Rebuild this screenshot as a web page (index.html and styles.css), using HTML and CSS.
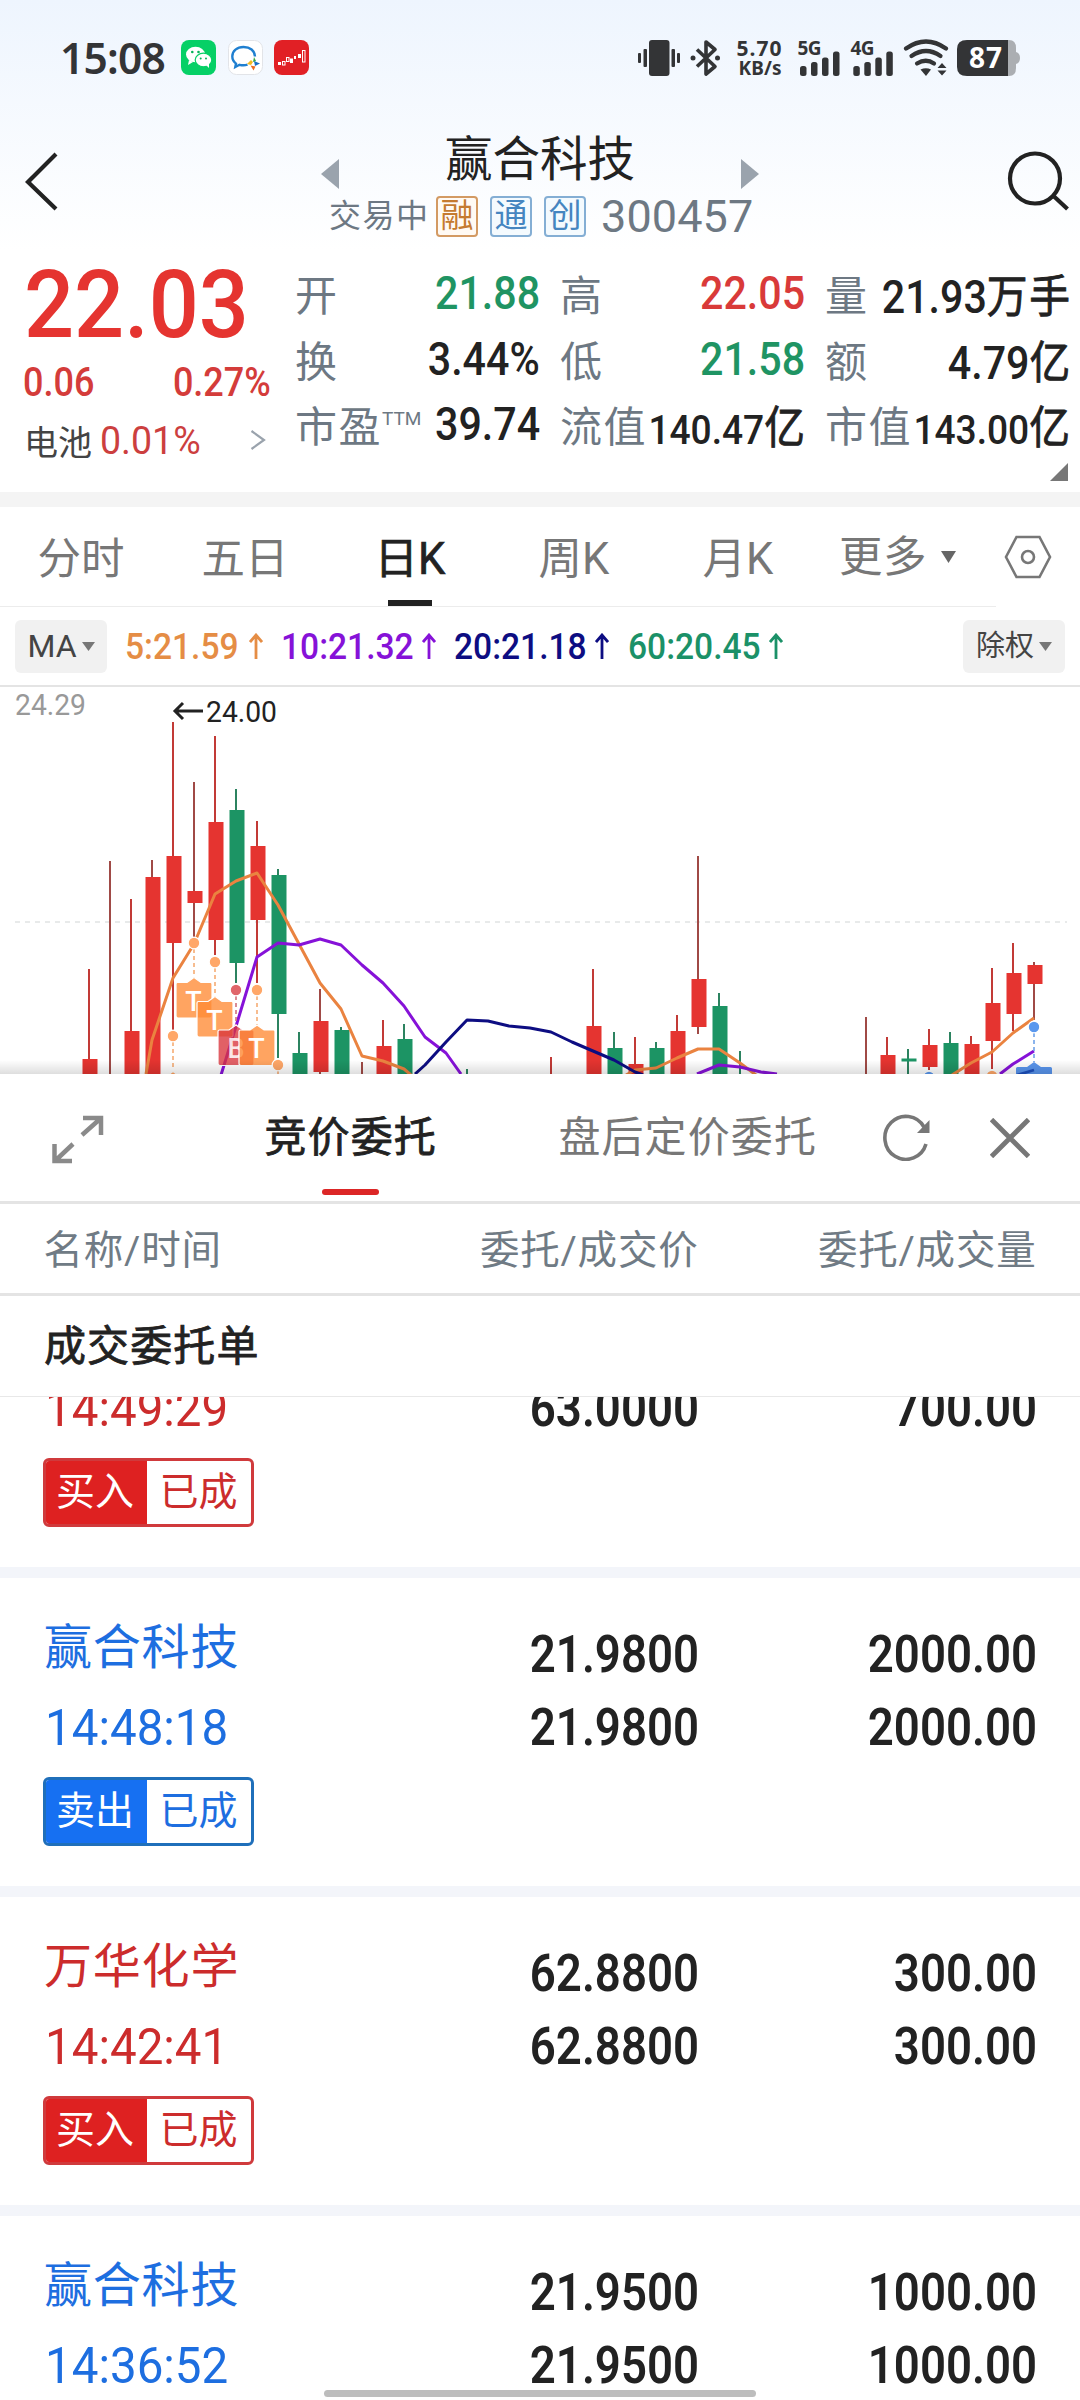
FILE: index.html
```html
<!DOCTYPE html>
<html lang="zh-CN">
<head>
<meta charset="utf-8">
<title>赢合科技 300457</title>
<link rel="stylesheet" href="styles.css">
</head>
<body>
<div class="top">
  <div class="status">
    <span class="clock">15:08</span>
    <div class="apps">
      <svg width="35" height="35" viewBox="0 0 35 35"><rect width="35" height="35" rx="8" fill="#06d066"/><ellipse cx="14.500" cy="14.500" rx="9.500" ry="7.800" fill="#fff"/><path d="M8 20l-1 5 5-3z" fill="#fff"/><ellipse cx="22.500" cy="20" rx="8.300" ry="6.800" fill="#fff" stroke="#06d066" stroke-width="1.200"/><path d="M25 25l3 3 0-5z" fill="#fff"/><g fill="#06b058"><circle cx="11.300" cy="12" r="1.300"/><circle cx="17.500" cy="12" r="1.300"/><circle cx="19.700" cy="18.500" r="1"/><circle cx="25" cy="18.500" r="1"/></g></svg>
      <svg width="35" height="35" viewBox="0 0 35 35"><rect x=".5" y=".5" width="34" height="34" rx="8" fill="#fff" stroke="#e2e4e8"/><path d="M27 16.500C26.800 10.500 22 7 15.500 7 9 7 4.300 11 4.300 16.300c0 3.200 1.500 5.700 3.700 7.300L7.300 27l4.200-2.200c3 .8 5.500.7 8-.2" fill="none" stroke="#1f7fd0" stroke-width="2.400"/><path d="M26 17l2 4-3 1z" fill="#36a93f"/><path d="M19 24l4-4 2 2-2 3z" fill="#f3b91f"/><path d="M26 21l6 2.500-5 2.500z" fill="#1a6fc4"/><path d="M22.500 25.500l5 1-2 4z" fill="#ee6a1d"/></svg>
      <svg width="35" height="35" viewBox="0 0 35 35"><rect width="35" height="35" rx="8" fill="#e12025"/><g fill="#fff"><rect x="4" y="22" width="3" height="3"/><rect x="16" y="18.500" width="3" height="4.500"/><rect x="20" y="16" width="2" height="3"/><rect x="24" y="14" width="3" height="4"/></g><g fill="none" stroke="#fff"><rect x="8.500" y="21.500" width="2.500" height="3.500"/><rect x="12.500" y="17.500" width="2.500" height="4"/><rect x="28.500" y="10.500" width="2.500" height="11.500"/></g></svg>
    </div>
    <div class="sys">
      <svg width="382" height="40" viewBox="638 38 382 40" fill="#333436">
        <rect x="649" y="40" width="20.500" height="36" rx="3"/><rect x="638" y="53" width="3" height="10" rx="1"/><rect x="643.500" y="49" width="3.500" height="18" rx="1"/><rect x="671.500" y="49" width="3.500" height="18" rx="1"/><rect x="677" y="53" width="3" height="10" rx="1"/>
        <path d="M697 49.500L715 66.500 706 74V42l9 7.500L697 66.500" fill="none" stroke="#333436" stroke-width="3.600" stroke-linejoin="round"/><circle cx="693" cy="58" r="2.500"/><circle cx="717.500" cy="58" r="2.500"/>
        <text class="sys-text" x="736.500" y="56" font-size="21" textLength="45">5.70</text>
        <text class="sys-text" x="738.500" y="75" font-size="19" textLength="43">KB/s</text>
        <text class="sys-text" x="797.500" y="54.500" font-size="19" textLength="24">5G</text>
        <g id="bars"><rect x="800" y="66" width="6.500" height="10" rx="2.500"/><rect x="811" y="62" width="6.500" height="14" rx="2.500"/><rect x="822" y="57.500" width="6.500" height="18.500" rx="2.500"/><rect x="833" y="51.500" width="6.500" height="24.500" rx="2.500"/></g>
        <text class="sys-text" x="850.500" y="54.500" font-size="19" textLength="24">4G</text>
        <use href="#bars" x="53.300"/>
        <g fill="none" stroke="#333436" stroke-width="4.200" stroke-linecap="round"><path d="M906 48.500Q926 34.500 946 48.500"/><path d="M911.500 56Q926 46 940.500 56"/><path d="M917 63.500Q926 58 934 63.500"/></g><path d="M920.500 69.500Q926 67 931 69.500L926 76z"/>
        <path d="M942 63l4.500 5h-9zM942 75.500l4.500-5h-9z"/>
        <path d="M1008 40h1q7 0 7 8v4q4 1 4 6t-4 6v4q0 8-7 8h-1z" fill="#abaeb2"/><path d="M967 40h41v36h-41q-10 0-10-9V49q0-9 10-9z"/>
        <text class="sys-text" x="969" y="68" font-size="28" fill="#fff" textLength="33">87</text>
      </svg>
    </div>
  </div>

  <div class="header">
    <svg class="back" width="34" height="60" viewBox="0 0 34 60"><path d="M32 3L4 31 32 58" fill="none" stroke="#222" stroke-width="4.200"/></svg>
    <svg class="prev" width="18" height="30"><path d="M0 15L18 0v30z" fill="#9aa3ad"/></svg>
    <div class="names">
      <h1>赢合科技</h1>
      <div class="sub"><span class="state">交易中</span><span class="badge rong">融</span><span class="badge">通</span><span class="badge">创</span><span class="code">300457</span></div>
    </div>
    <svg class="next" width="18" height="30"><path d="M18 15L0 0v30z" fill="#9aa3ad"/></svg>
    <svg class="search" width="62" height="62" viewBox="0 0 62 62" fill="none" stroke="#222" stroke-width="4.200"><circle cx="28" cy="27.500" r="25"/><path d="M46 44.500L60.500 58"/></svg>
  </div>

  <div class="quote">
    <div class="last">
      <div class="price"><span>22.03</span></div>
      <div class="change"><span>0.06</span><span>0.27%</span></div>
      <div class="sector"><span class="sector-name">电池</span><span class="sector-chg">0.01%</span><svg width="16" height="20" viewBox="0 0 16 20"><path d="M1.500 1L14 10 1.500 19" fill="none" stroke="#9aa3ad" stroke-width="2.200"/></svg></div>
    </div>
    <div class="stats">
      <div class="stat"><span class="k">开</span><span class="v green">21.88</span></div>
      <div class="stat"><span class="k">高</span><span class="v red">22.05</span></div>
      <div class="stat"><span class="k">量</span><span class="v">21.93<i>万手</i></span></div>
      <div class="stat"><span class="k">换</span><span class="v">3.44%</span></div>
      <div class="stat"><span class="k">低</span><span class="v green">21.58</span></div>
      <div class="stat"><span class="k">额</span><span class="v">4.79<i>亿</i></span></div>
      <div class="stat"><span class="k">市盈<sup>TTM</sup></span><span class="v">39.74</span></div>
      <div class="stat"><span class="k">流值</span><span class="v small">140.47<i>亿</i></span></div>
      <div class="stat"><span class="k">市值</span><span class="v small">143.00<i>亿</i></span></div>
      <svg class="corner" width="18" height="18"><path d="M18 0v18H0z" fill="#777"/></svg>
    </div>
  </div>
</div>

<div class="tabs">
  <span class="tab">分时</span><span class="tab">五日</span><span class="tab active">日K</span><span class="tab">周K</span><span class="tab">月K</span>
  <span class="more">更多<svg width="15" height="12"><path d="M0 0h15L7.500 12z" fill="#666"/></svg></span>
  <svg class="gear" width="48" height="44" viewBox="0 0 48 44" fill="none" stroke="#777" stroke-width="2.600"><path d="M12.500 2h23L46 22 35.500 42h-23L2 22z"/><circle cx="24" cy="22" r="6"/></svg>
</div>

<div class="ma">
  <span class="pill">MA<svg width="13" height="9"><path d="M0 0h13L6.500 9z" fill="#777"/></svg></span>
  <span class="avg a5"><b>5:21.59</b><svg width="14" height="26" viewBox="0 0 14 26"><path d="M7 26V2M1 9l6-7 6 7"/></svg></span>
  <span class="avg a10"><b>10:21.32</b><svg width="14" height="26" viewBox="0 0 14 26"><path d="M7 26V2M1 9l6-7 6 7"/></svg></span>
  <span class="avg a20"><b>20:21.18</b><svg width="14" height="26" viewBox="0 0 14 26"><path d="M7 26V2M1 9l6-7 6 7"/></svg></span>
  <span class="avg a60"><b>60:20.45</b><svg width="14" height="26" viewBox="0 0 14 26"><path d="M7 26V2M1 9l6-7 6 7"/></svg></span>
  <span class="pill adj">除权<svg width="13" height="9"><path d="M0 0h13L6.500 9z" fill="#777"/></svg></span>
</div>

<div class="chart">
<svg width="1080" height="387" viewBox="0 687 1080 387">
  <defs><linearGradient id="shade" x1="0" y1="0" x2="0" y2="1"><stop offset="0" stop-color="#000" stop-opacity="0"/><stop offset="1" stop-color="#000" stop-opacity=".13"/></linearGradient></defs>
  <path d="M15 922H1067" stroke="#e8eaea" stroke-width="2" stroke-dasharray="5 5"/>
  <text class="axis" x="15" y="715" textLength="71" lengthAdjust="spacingAndGlyphs" fill="#999">24.29</text>
  <text class="axis" x="206" y="722" textLength="71" lengthAdjust="spacingAndGlyphs" fill="#222">24.00</text>
  <path d="M203 711H175M183 703l-8 8 8 8" fill="none" stroke="#222" stroke-width="3"/>
  <g stroke-width="2" stroke="#c23a36">
    <path d="M89 969V1074M131 899V1074M173 722V1030M215 736V955M257 821V983M383 1020V1074M551 1057V1074M593 969V1074M635 1037V1074M677 1015V1074M887 1037V1074M929 1029V1070M971 1036V1074M992 968V1069M1013 943V1031"/>
    <path d="M110 861V1074M152 860V1074M194 782V937M320 989V1074M362 1062V1074M698 856V1034M866 1017V1074M1034 962V1020" stroke="#a04a46"/>
    <path d="M236 789V983M278 869V1058M299 1032V1074M341 1027V1074M404 1024V1074M467 1069V1074M614 1032V1074M656 1042V1074M719 993V1074M740 1051V1074M908 1049V1074M950 1032V1074" stroke="#2c8360"/>
  </g>
  <path fill="#e53430" d="M82.500 1059h15v15h-15zM124.500 1031h15v43h-15zM145.500 877h15v197h-15zM166.500 856h15v87h-15zM187.500 891h15v12h-15zM208.500 822h15v118h-15zM250.500 846h15v74h-15zM313.500 1021h15v51h-15zM376.500 1046h15v28h-15zM586.500 1026h15v48h-15zM628.500 1064h15v10h-15zM670.500 1031h15v43h-15zM691.500 979h15v48h-15zM880.500 1055h15v19h-15zM922.500 1045h15v22h-15zM964.500 1044h15v30h-15zM985.500 1003h15v38h-15zM1006.500 973h15v41h-15zM1027.500 965h15v19h-15z"/>
  <path fill="#1c9464" d="M229.500 810h15v153h-15zM271.500 875h15v139h-15zM292.500 1053h15v21h-15zM334.500 1030h15v44h-15zM397.500 1039h15v35h-15zM607.500 1048h15v26h-15zM649.500 1048h15v26h-15zM712.500 1006h15v68h-15zM901.500 1058.500h15v3h-15zM943.500 1043h15v31h-15z"/>
  <g fill="none" stroke-width="3" stroke-linejoin="round">
    <path stroke="#ea8340" d="M146 1074L152 1040 173 978 194 944 215 894 236 881 257 873 278 905 299 944 320 983 341 1009 362 1056 383 1061 404 1069 411 1075M626 1075L635 1070 656 1068 677 1058 698 1049 719 1049 740 1063 756 1075M952 1075L971 1063 992 1052 1013 1033 1034 1018"/>
    <path stroke="#8612d8" d="M221 1075L237 1023 257 957 278 943 299 945 320 939 341 945 362 965 383 983 404 1006 425 1037 446 1053 461 1074M697 1074L719 1065 740 1067 761 1072 777 1074M1000 1074L1013 1064 1034 1051"/>
  </g>
  <g stroke-width="1.600" stroke-dasharray="4 3">
    <path stroke="#f5ac74" d="M194 949V979M215 968V998M257 996V1026M173 1042V1070M278 1071V1074"/><path stroke="#cf707c" d="M236 996V1026"/><path stroke="#6fa2e8" d="M1034 1033V1062"/>
  </g>
  <g stroke="#fff" stroke-width="1.200" fill="#ffa768">
    <g fill="#ff8b35" fill-opacity=".78">
      <path id="flag" d="M177.500 982.500H187L194 977.500 201 982.500H210.500Q212 982.500 212 984V1016Q212 1018 210 1018H178Q176 1018 176 1016V984Q176 982.500 177.500 982.500Z"/>
      <use href="#flag" x="21" y="19"/><use href="#flag" x="-21" y="94"/>
    </g>
    <path d="M219.500 1030H229L236 1025 243 1030H252.500Q254 1030 254 1031.500V1063.500Q254 1065.500 252 1065.500H220Q218 1065.500 218 1063.500V1031.500Q218 1030 219.500 1030Z" fill="#d9333b" fill-opacity=".78"/>
    <path d="M1017.500 1067H1027L1034 1062 1041 1067H1050.500Q1052 1067 1052 1068.500V1080H1016V1068.500Q1016 1067 1017.500 1067Z" fill="#2f7be8" fill-opacity=".8" stroke="none"/>
  </g>
  <g class="flag-text"><text x="193.500" y="1011">T</text><text x="214.500" y="1030">T</text><text x="236" y="1058" fill-opacity=".85">B</text></g>
  <g stroke="#fff" stroke-width="1.200" fill="#ffa768">
    <path d="M240.500 1030H250L257 1025 264 1030H273.500Q275 1030 275 1031.500V1063.500Q275 1065.500 273 1065.500H241Q239 1065.500 239 1063.500V1031.500Q239 1030 240.500 1030Z" fill="#ff8b35" fill-opacity=".78"/>
    <circle cx="194" cy="943" r="5.800"/><circle cx="215" cy="962" r="5.800"/><circle cx="257" cy="990" r="5.800"/><circle cx="173" cy="1036" r="5.800"/><circle cx="278" cy="1065" r="5.800"/><circle cx="992" cy="1076" r="5.800"/>
    <circle cx="236" cy="990" r="5.800" fill="#e0656a"/><circle cx="1034" cy="1027" r="5.800" fill="#5a98ee"/><circle cx="929" cy="1077" r="5.800" fill="#5a98ee"/>
  </g>
  <g class="flag-text"><text x="256.500" y="1058">T</text></g>
  <path fill="none" stroke="#0d0d82" stroke-width="3" stroke-linejoin="round" d="M415 1074L425 1065 446 1042 467 1020 488 1021 509 1026 530 1028 551 1032 572 1042 593 1051 614 1060 635 1072 643 1075"/><path stroke="#1c4fbe" stroke-width="2.800" d="M1017 1075L1034 1070"/>
  <rect y="1060" width="1080" height="14" fill="url(#shade)"/>
</svg>
</div>

<div class="sheet">
  <div class="sheet-head">
    <svg class="expand" width="52" height="50" viewBox="0 0 52 50" fill="none" stroke="#8a8a8a" stroke-width="4.500"><path d="M31 3H49V20M48 4L30 20M21 29L4 45M2.500 29V46H20"/></svg>
    <span class="stab on">竞价委托</span>
    <span class="stab">盘后定价委托</span>
    <svg class="refresh" width="48" height="48" viewBox="0 0 48 48"><path d="M41 14A21 21.500 0 1 0 43 31" fill="none" stroke="#777" stroke-width="3.600"/><path d="M46.500 7v13H34z" fill="#777"/></svg>
    <svg class="close" width="40" height="40" viewBox="0 0 40 40"><path d="M1.500 1.500l37 37M38.500 1.500l-37 37" stroke="#777" stroke-width="4.800"/></svg>
  </div>
  <div class="cols"><span>名称/时间</span><span>委托/成交价</span><span>委托/成交量</span></div>
  <div class="group">成交委托单</div>
  <div class="list">
    <div class="order buy first">
      <div class="who"><div class="time"><span>14:49:29</span></div><div class="tag"><span>买入</span><span>已成</span></div></div>
      <div class="nums"><span>63.0000</span></div><div class="nums"><span>700.00</span></div>
    </div>
    <div class="order sell">
      <div class="who"><div class="name">赢合科技</div><div class="time"><span>14:48:18</span></div><div class="tag"><span>卖出</span><span>已成</span></div></div>
      <div class="nums"><span>21.9800</span><span>21.9800</span></div><div class="nums"><span>2000.00</span><span>2000.00</span></div>
    </div>
    <div class="order buy">
      <div class="who"><div class="name">万华化学</div><div class="time"><span>14:42:41</span></div><div class="tag"><span>买入</span><span>已成</span></div></div>
      <div class="nums"><span>62.8800</span><span>62.8800</span></div><div class="nums"><span>300.00</span><span>300.00</span></div>
    </div>
    <div class="order sell">
      <div class="who"><div class="name">赢合科技</div><div class="time"><span>14:36:52</span></div></div>
      <div class="nums"><span>21.9500</span><span>21.9500</span></div><div class="nums"><span>1000.00</span><span>1000.00</span></div>
    </div>
  </div>
</div>
<div class="home"></div>
</body>
</html>
```
FILE: styles.css
```css
* { box-sizing: border-box; }
html, body { margin: 0; }
body {
  width: 1080px; height: 2400px; overflow: hidden; position: relative;
  display: flex; flex-direction: column; background: #fff; color: #222;
  font-family: Roboto, "Noto Sans CJK SC", sans-serif; white-space: nowrap;
}
svg { display: block; flex: none; }
i { font-style: normal; }

.top { height: 492px; background: linear-gradient(#eef5fe 0, #fff 250px); }
.status { height: 113px; padding-top: 35px; display: flex; align-items: flex-start; }
.clock { width: 181px; padding-left: 60px; font: 600 42.500px/45px "Noto Sans", sans-serif; letter-spacing: -.8px; color: #333436; }
.apps { display: flex; gap: 11.500px; padding-top: 5px; }
.sys { margin-left: auto; padding: 3px 60px 0 0; }
.sys-text { font-family: "Noto Sans", sans-serif; font-weight: 700; }

.header { height: 133px; display: flex; align-items: flex-start; }
.back { margin: 38px 0 0 23.500px; }
.prev { margin: 46px 0 0 263.500px; }
.names { width: 402px; padding-top: 17px; }
h1 { margin: 0; font-size: 47.500px; font-weight: 400; line-height: 60px; text-align: center; }
.sub { display: flex; align-items: center; height: 52px; margin-left: -10px; color: #6d7883; }
.sub span { flex: none; }
.state { font-size: 32px; line-height: 40px; letter-spacing: 1.500px; width: 107px; }
.badge {
  width: 42px; height: 41px; margin-right: 12px; border: 2px solid #84aed4; border-radius: 4px;
  background: #f4fafe; color: #4585c0; font-size: 33px; line-height: 36px; text-align: center;
}
.rong { border-color: #d39a63; background: #fffaf4; color: #c57b30; }
.code { font-size: 45px; margin-left: 3px; letter-spacing: .1px; }
.next { margin: 46px 0 0; }
.search { margin: 38px 11px 0 auto; }

.quote { display: flex; padding-top: 17px; }
.last { width: 295px; padding-left: 24px; }
.price { height: 84px; color: #e53430; font-size: 95px; font-weight: 500; line-height: 84px; }
.price span, .change span, .sector-chg, .time span, .avg b { display: inline-block; transform: scaleX(.92); transform-origin: left; }
.price span { transform: scaleX(.928); }
.change { display: flex; justify-content: space-between; width: 247px; padding-top: 11px; color: #d43c3a; font-size: 40px; font-weight: 500; line-height: 50px; }
.change span { margin-left: -1px; transform: scaleX(.9); }
.change span:last-child { transform-origin: right; }
.sector { display: flex; align-items: center; height: 64px; }
.sector-name { font-size: 34px; width: 76px; color: #444; }
.sector-chg { font-size: 39.500px; width: 150px; color: #cc3f3f; transform: scaleX(.95); }
.stats { display: grid; grid-template-columns: 244px 244px 244px; column-gap: 21px; grid-auto-rows: 65.500px; margin-top: -2px; }
.stat { display: flex; justify-content: space-between; align-items: center; }
.k { position: relative; top: -1px; font-size: 42px; letter-spacing: 1.500px; color: #6d7883; }
.stat sup { display: inline-block; width: 39px; font-size: 19px; letter-spacing: 0; line-height: 1; vertical-align: 17px; }
.v { margin: 0 -1px 0 -60px; font-size: 45.500px; font-weight: 500; transform: scaleX(.905); transform-origin: right; }
.v i { font-size: 45px; font-weight: 400; -webkit-text-stroke: .8px currentColor; letter-spacing: 2px; margin-right: -2px; }
.small { font-size: 41px; }
.green { color: #1f9463; }
.red { color: #d93a39; }
.corner { grid-column: 3; justify-self: end; margin: 5px 1px 0 0; }

.tabs { height: 115px; border-top: 15px solid #f4f4f4; display: flex; position: relative; font-size: 43.500px; line-height: 105px; color: #777; }
.tabs::after { content: ""; position: absolute; left: 0; bottom: 0; width: 996px; height: 1px; background: #ececec; }
.tab { width: 164px; height: 100px; text-align: center; }
.tab:nth-child(-n+2) { text-indent: -2px; }
.active { position: relative; color: #222; -webkit-text-stroke: .7px #222; }
.active::after { content: ""; position: absolute; left: 60px; bottom: 1px; width: 44px; height: 6px; background: #222; }
.more { height: 100px; margin-left: 19px; display: flex; align-items: center; gap: 14px; letter-spacing: .5px; }
.gear { margin: 28px 0 0 48px; }

.ma { height: 80px; border-bottom: 2px solid #e4e4e4; display: flex; align-items: center; padding: 0 15px; }
.pill { width: 92px; height: 53px; border-radius: 6px; background: #f1f1f1; color: #444; font-size: 32px; line-height: 53px; display: flex; align-items: center; justify-content: center; gap: 5px; }
.adj { width: 102px; margin-left: auto; font-size: 29px; }
.avg { display: flex; align-items: center; width: 173px; font-size: 36.500px; }
.avg b { font-weight: 500; width: 141px; }
.avg path { fill: none; stroke: currentColor; stroke-width: 2.800; }
.a5 { width: 156px; margin-left: 18px; color: #e58d45; }
.a5 b { width: 124px; }
.a10 { color: #8612d8; }
.a20 { width: 174px; color: #0d0d82; }
.a60 { color: #1b9168; }

.chart { height: 387px; }
.axis { font-size: 29.500px; }
.flag-text { font: 500 27px Roboto, sans-serif; fill: #fff; text-anchor: middle; }

.sheet { height: 1326px; background: #fff; }
.sheet-head { height: 130px; border-bottom: 3px solid #e4e4e4; display: flex; align-items: flex-start; }
.expand { margin: 41px 0 0 52px; }
.stab { height: 124px; font-size: 42px; letter-spacing: 1.100px; line-height: 128px; color: #777; }
.stab.on { position: relative; margin-left: 160.500px; color: #222; -webkit-text-stroke: .8px #222; }
.stab.on::after { content: ""; position: absolute; left: 57.500px; bottom: 3px; width: 57px; height: 6px; border-radius: 3px; background: #dc2626; }
.stab.on + .stab { margin-left: 121.500px; }
.refresh { margin: 39px 0 0 66px; }
.close { margin: 44px 0 0 59px; }
.cols { height: 92px; border-bottom: 3px solid #e4e4e4; display: grid; grid-template-columns: 200px 455px 338px; font-size: 39.500px; letter-spacing: .800px; line-height: 93px; color: #707b85; padding-left: 43.500px; }
.cols span { height: 89px; }
.cols span + span { text-align: right; }
.group { height: 101px; padding-left: 44px; border-bottom: 1px solid #e8e8e8; font-size: 42px; -webkit-text-stroke: .8px #222; letter-spacing: 1.100px; line-height: 101px; }
.list { height: 1003px; overflow: hidden; }
.order { height: 319px; display: flex; border-bottom: 11px solid #f3f5fa; padding: 30px 0 0 43px; }
.sell { --c: #1d6ee0; --fill: #1670f2; --line: #1f6fba; }
.buy { --c: #cc2c2c; --fill: #de2121; --line: #d03a3c; }
.who { width: 300px; color: var(--c); }
.name { padding-left: 1px; font-size: 48px; letter-spacing: .800px; line-height: 80px; }
.time { padding-left: 2px; font-size: 49.500px; line-height: 80px; }
.time span { transform: scaleX(.96); }
.tag { display: flex; width: 211px; height: 69px; margin-top: 9px; border: 3px solid var(--line); border-radius: 6px; background: #fff; font-size: 39px; line-height: 63px; text-align: center; overflow: hidden; }
.tag span { width: 104px; padding-right: 1px; }
.tag span:first-child { width: 101px; padding-right: 3px; background: var(--fill); color: #fff; }
.nums { width: 356px; padding-top: 9.500px; display: flex; flex-direction: column; text-align: right; font-size: 51.500px; font-weight: 600; line-height: 73.500px; }
.nums + .nums { width: 338px; }
.nums span { transform: scaleX(.885); transform-origin: right; }
.first { height: 181px; padding-top: 0; }
.first .time { margin-top: -28px; }
.first .nums { padding-top: 0; margin-top: -25px; }
.home { position: absolute; left: 324px; top: 2390px; width: 432px; height: 7px; border-radius: 4px; background: #bdbdbd; }
```
